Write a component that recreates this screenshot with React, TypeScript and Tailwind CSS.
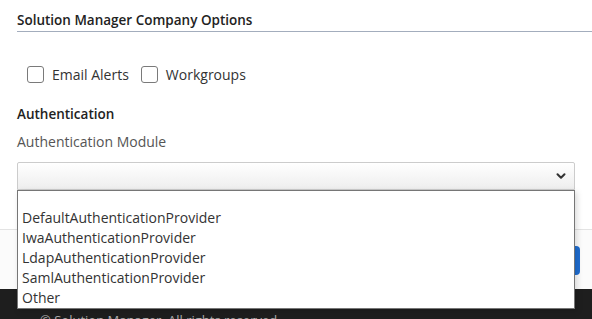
import { ChevronDown } from 'lucide-react';

const options = [
  '',
  'DefaultAuthenticationProvider',
  'IwaAuthenticationProvider',
  'LdapAuthenticationProvider',
  'SamlAuthenticationProvider',
  'Other',
];

function Checkbox({ label }: { label: string }) {
  return (
    <label className="flex items-center gap-[8px]">
      <span className="w-[17px] h-[17px] rounded-[3px] border border-[#7a7a7a] bg-white" />
      <span className="text-[14px] text-[#333]">{label}</span>
    </label>
  );
}

export default function App() {
  return (
    <div
      className="relative w-[592px] h-[319px] overflow-hidden bg-white"
      style={{ fontFamily: '"Open Sans", "Noto Sans", sans-serif' }}
    >
      <div className="pl-[17px] pt-[10px]">
        <h2 className="h-[22px] border-b border-[#a3adbd] text-[13.5px] font-semibold leading-[21px] text-[#222]">
          Solution Manager Company Options
        </h2>

        <div className="mt-[32px] ml-[10px] flex items-center gap-[12px] h-[20px]">
          <Checkbox label="Email Alerts" />
          <Checkbox label="Workgroups" />
        </div>

        <div className="mt-[20px] pr-[17px]">
          <h3 className="text-[13.5px] font-semibold leading-[20px] text-[#222]">Authentication</h3>
          <div className="mt-[8px] text-[14px] leading-[20px] text-[#555]">Authentication Module</div>
          <div className="relative mt-[10px]">
            <div className="h-[28px] border border-[#cccccc] rounded-t-[2px] bg-gradient-to-b from-white to-[#eeeeee] flex items-center justify-end pr-[6px]">
              <ChevronDown size={14} strokeWidth={3.5} className="text-[#333]" />
            </div>
            <div className="absolute left-0 right-0 top-[28px] z-10 border border-[#767676] bg-white shadow-[2px_2px_6px_rgba(0,0,0,0.15)]">
              {options.map((o, i) => (
                <div
                  key={i}
                  className={`${i === 0 ? 'h-[17px]' : 'h-[20px]'} pl-[4px] text-[14px] leading-[20px] text-[#333]`}
                >
                  {o}
                </div>
              ))}
            </div>
          </div>
        </div>
      </div>

      <div className="mt-[39px] border-t border-[#e3e3e3] bg-[#fbfbfb] h-[60px] flex items-start justify-end pr-[12px] pt-[16px]">
        <button className="w-[80px] h-[29px] rounded-[4px] bg-[#1f6dd0] text-white text-[14px]">Save</button>
      </div>

      <div className="h-[40px] bg-[#1e1e1e] pl-[40px] pt-[22px]">
        <div className="text-[13px] text-[#aaaaaa]">© Solution Manager. All rights reserved.</div>
      </div>
    </div>
  );
}
